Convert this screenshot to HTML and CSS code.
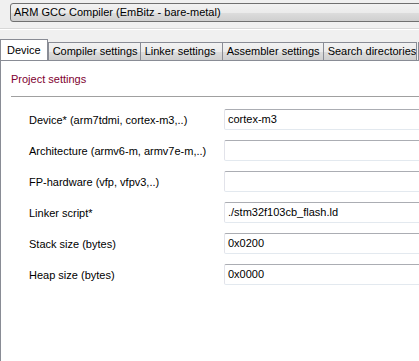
FILE: index.html
```html
<!DOCTYPE html>
<html lang="en">

<head>
    <meta charset="UTF-8">
    <meta name="viewport" content="width=device-width, initial-scale=1.0">
    <title>ARM GCC Compiler</title>
    <link rel="stylesheet" href="styles.css">
</head>

<body>
    <div class="toolbar">
        <div class="combo">ARM GCC Compiler (EmBitz - bare-metal)</div>
    </div>
    <div class="separator"></div>

    <div class="tabs">
        <div class="tab active">Device</div>
        <div class="tab tab-compiler">Compiler settings</div>
        <div class="tab tab-linker">Linker settings</div>
        <div class="tab tab-assembler">Assembler settings</div>
        <div class="tab tab-search">Search directories</div>
        <div class="tab stub"></div>
    </div>

    <div class="panel">
        <div class="section-title">Project settings</div>
        <div class="section-line"></div>

        <div class="form">
            <div class="row">
                <label>Device* (arm7tdmi, cortex-m3,..)</label>
                <div class="field">cortex-m3</div>
            </div>
            <div class="row">
                <label>Architecture (armv6-m, armv7e-m,..)</label>
                <div class="field"></div>
            </div>
            <div class="row">
                <label>FP-hardware (vfp, vfpv3,..)</label>
                <div class="field"></div>
            </div>
            <div class="row">
                <label>Linker script*</label>
                <div class="field">./stm32f103cb_flash.ld</div>
            </div>
            <div class="row">
                <label>Stack size (bytes)</label>
                <div class="field">0x0200</div>
            </div>
            <div class="row">
                <label>Heap size (bytes)</label>
                <div class="field">0x0000</div>
            </div>
        </div>
    </div>
</body>

</html>
```

FILE: styles.css
```css
body {
    margin: 0;
    width: 419px;
    height: 361px;
    overflow: hidden;
    background: #f0f0f0;
    font-family: 'Liberation Sans', Arial, sans-serif;
    font-size: 11px;
    color: #000;
    display: flex;
    flex-direction: column;
}

.toolbar {
    padding: 3px 0 0 10px;
    height: 26px;
    box-sizing: border-box;
    overflow: hidden;
}

.combo {
    width: 440px;
    height: 19px;
    box-sizing: border-box;
    border: 1px solid #707070;
    border-radius: 3px;
    background: linear-gradient(to bottom, #f2f2f2 0%, #ebebeb 50%, #dddddd 51%, #cfcfcf 100%);
    padding: 2px 0 0 3px;
    white-space: nowrap;
}

.separator {
    height: 1px;
    margin-top: 2px;
    background: #d8d8d8;
    border-bottom: 1px solid #fff;
}

.tabs {
    display: flex;
    align-items: flex-end;
    height: 30px;
    padding-left: 1px;
    box-sizing: border-box;
    white-space: nowrap;
    overflow: hidden;
}

.tab {
    height: 18px;
    padding: 0 4px;
    line-height: 17px;
    box-sizing: border-box;
    border: 1px solid #898c95;
    border-bottom: none;
    margin-left: -1px;
    background: linear-gradient(to bottom, #f2f2f2 0%, #ebebeb 50%, #dddddd 51%, #cfcfcf 100%);
    flex-shrink: 0;
    overflow: hidden;
}

.tab-compiler {
    width: 93px;
}

.tab-linker {
    width: 83px;
}

.tab-assembler {
    width: 102px;
}

.tab-search {
    width: 94px;
}

.tab.active {
    height: 22px;
    line-height: 20px;
    padding: 0 6px;
    background: #fff;
    position: relative;
    z-index: 1;
    margin-bottom: -1px;
    margin-right: 1px;
}

.tab.stub {
    width: 20px;
    margin-left: 1px;
}

.panel {
    flex: 1;
    background: #fff;
    border-left: 1px solid #898c95;
    border-top: 1px solid #898c95;
    padding: 12px 0 0 10px;
}

.section-title {
    color: #800030;
    height: 16px;
}

.section-line {
    height: 1px;
    background: #a0a0a0;
    margin-top: 7px;
}

.form {
    display: flex;
    flex-direction: column;
    gap: 10px;
    padding-top: 12px;
}

.row {
    display: flex;
    align-items: center;
    height: 21px;
}

.row label {
    width: 195px;
    padding-left: 18px;
    white-space: nowrap;
}

.field {
    flex: 1;
    height: 21px;
    box-sizing: border-box;
    border: 1px solid #abadb3;
    border-right: none;
    border-radius: 2px 0 0 2px;
    padding: 3px 0 0 3px;
    border-color: #abadb3 #e3e9ef #e3e9ef #e2e3ea;
    white-space: nowrap;
}
```
